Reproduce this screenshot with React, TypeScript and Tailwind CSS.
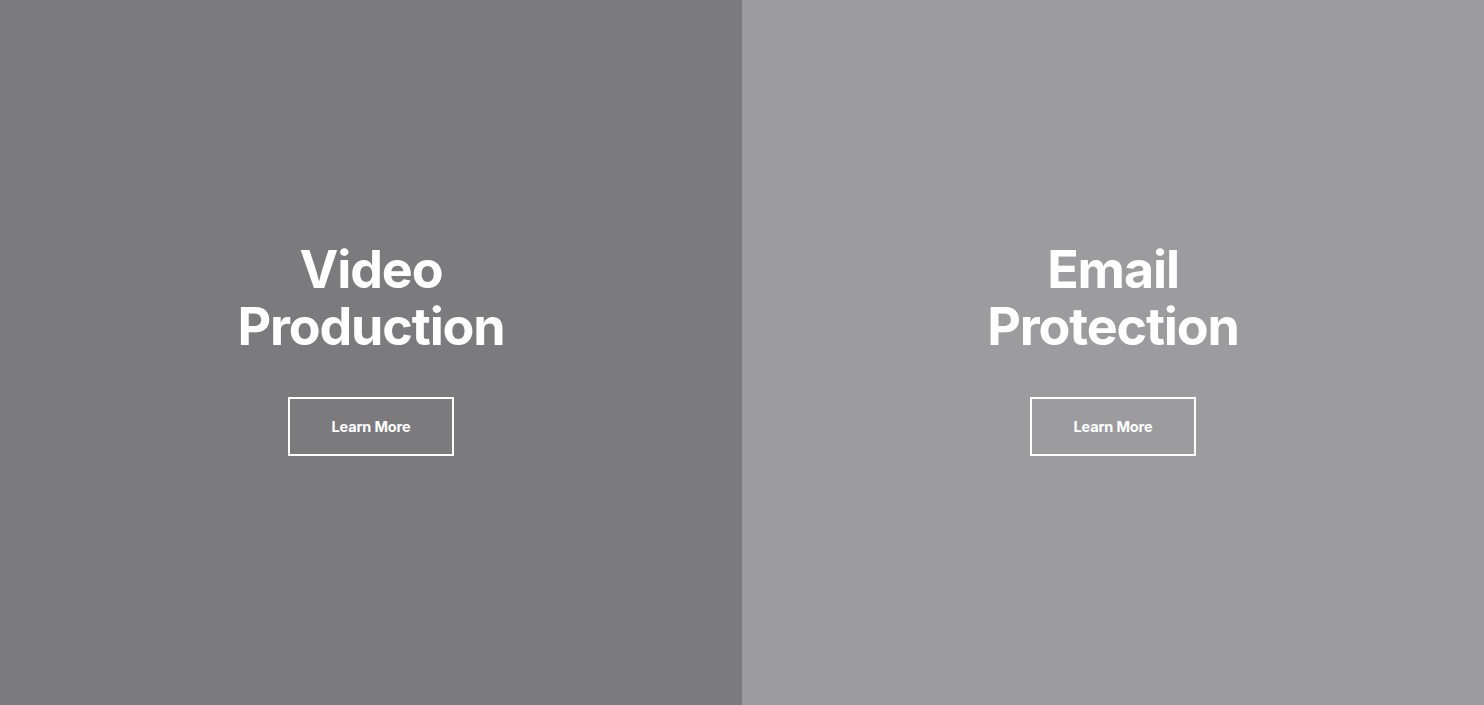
const panels = [
  { title: ['Video', 'Production'], bg: 'bg-[#7b7b7d]' },
  { title: ['Email', 'Protection'], bg: 'bg-[#9c9c9e]' },
]

export default function App() {
  return (
    <div className="grid grid-cols-2 h-[705px] w-full font-['Inter',sans-serif] text-white">
      {panels.map((p) => (
        <section key={p.title[0]} className={`${p.bg} flex flex-col items-center justify-center pb-[8px]`}>
          <h2 className="text-[52px] leading-[57px] font-bold tracking-[-0.022em] text-center">
            {p.title[0]}
            <br />
            {p.title[1]}
          </h2>
          <a href="#" className="mt-[42px] w-[166px] h-[59px] border-2 border-white flex items-center justify-center text-[14.5px] font-bold tracking-[-0.01em]">
            Learn More
          </a>
        </section>
      ))}
    </div>
  )
}
